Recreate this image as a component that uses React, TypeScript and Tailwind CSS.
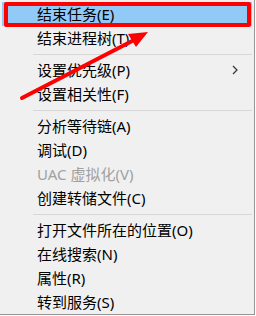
import React from 'react';

type Item = { label: string; disabled?: boolean; sub?: boolean; active?: boolean } | 'sep';

const items: Item[] = [
  { label: '结束任务(E)', active: true },
  { label: '结束进程树(T)' },
  'sep',
  { label: '设置优先级(P)', sub: true },
  { label: '设置相关性(F)' },
  'sep',
  { label: '分析等待链(A)' },
  { label: '调试(D)' },
  { label: 'UAC 虚拟化(V)', disabled: true },
  { label: '创建转储文件(C)' },
  'sep',
  { label: '打开文件所在的位置(O)' },
  { label: '在线搜索(N)' },
  { label: '属性(R)' },
  { label: '转到服务(S)' },
];

export default function App() {
  return (
    <div
      className="relative w-[256px] h-[316px] bg-[#fbfbfb] overflow-hidden"
      style={{ fontFamily: '"Noto Sans", "Noto Sans CJK SC", sans-serif' }}
    >
      <div className="w-[255px] h-[315px] bg-[#f0f0f0] border-r border-b border-[#979797] pt-[2px]">
        {items.map((it, i) =>
          it === 'sep' ? (
            <div key={i} className="h-[8px] flex items-center">
              <div className="ml-[33px] mr-[2px] h-px flex-1 bg-[#d7d7d7]" />
            </div>
          ) : (
            <div
              key={i}
              className={`mx-[2px] h-[24px] flex items-center pl-[35px] pr-[12px] text-[15px] leading-none ${
                it.active ? 'bg-[#91c9f7]' : ''
              } ${it.disabled ? 'text-[#a0a0a0]' : 'text-black'}`}
            >
              <span className="flex-1">{it.label}</span>
              {it.sub && (
                <svg width="6" height="10" viewBox="0 0 6 10" className="mr-[2px]">
                  <polyline points="1,1 5,5 1,9" fill="none" stroke="#333" strokeWidth="1.2" />
                </svg>
              )}
            </div>
          )
        )}
      </div>

      {/* red annotation box */}
      <div className="absolute left-[4px] top-[2px] w-[247px] h-[25px] border-[4px] border-[#ff0000] rounded-[2px]" />

      {/* red annotation arrow */}
      <svg className="absolute left-0 top-0" width="256" height="316" viewBox="0 0 256 316">
        <line x1="22" y1="98" x2="136" y2="39" stroke="#ff0000" strokeWidth="4" strokeLinecap="round" />
        <polygon points="148,32 128,34 136,47" fill="#ff0000" />
      </svg>
    </div>
  );
}
